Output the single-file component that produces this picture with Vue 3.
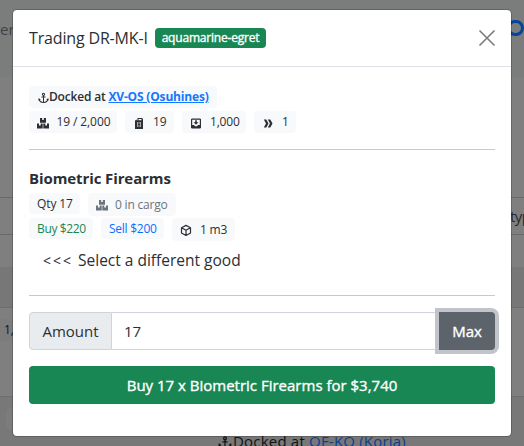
<script setup>
const holds = [
  { icon: 'boxes', text: '19 / 2,000', cls: 'w-cargo' },
  { icon: 'fuel', text: '19', cls: 'w-fuel' },
  { icon: 'inbox', text: '1,000', cls: 'w-inbox' },
  { icon: 'speed', text: '1', cls: 'w-speed' },
]
</script>

<template>
  <div class="page">
    <svg width="0" height="0" class="defs">
      <symbol id="anchor" viewBox="0 0 12 12">
        <g fill="none" stroke="currentColor" stroke-width="1.1">
          <circle cx="6" cy="2" r="1.2" />
          <path d="M6 3.2V10.8M3.8 5H8.2M1.2 7.2C1.5 9.6 3.3 10.7 6 10.8C8.7 10.7 10.5 9.6 10.8 7.2" />
        </g>
        <path d="M.4 8.6L.8 6L3 7.9ZM11.6 8.6L11.2 6L9 7.9Z" fill="currentColor" />
      </symbol>
      <symbol id="boxes" viewBox="0 0 12 12">
        <path fill="currentColor" d="M3 1H5.2V3H6.8V1H9V5.8H3ZM0 6.6H2V8.6H3.7V6.6H5.7V11.6H0ZM6.3 6.6H8.3V8.6H10V6.6H12V11.6H6.3Z" />
      </symbol>
      <symbol id="fuel" viewBox="0 0 12 12">
        <path fill="currentColor" fill-rule="evenodd" d="M2 3.8L3.5 2.2V3.3H4.5V1H9L10 2V12H2ZM5.5 2V3.2H8.5V2ZM4 5V10H4.6V5ZM7.4 5V10H8V5ZM5.400 5.500V6.500H6.600V5.500ZM5.400 8.500V9.500H6.600V8.500Z" />
      </symbol>
      <symbol id="inbox" viewBox="0 0 12 12">
        <path fill="currentColor" fill-rule="evenodd" d="M1.8 1.5H10.2L11 2.3V10.7L10.2 11.5H1.8L1 10.7V2.3ZM2.2 2.7V8H4L5 9.2H7L8 8H9.8V2.7ZM5.2 3.2H6.8V5.2H8.4L6 7.7L3.6 5.2H5.2Z" />
      </symbol>
      <symbol id="speed" viewBox="0 0 12 12">
        <path fill="currentColor" d="M1.8 2.5H4.3L6.5 6.5L4.3 10.5H1.8L4 6.5ZM5.8 2.5H8.3L10.5 6.5L8.3 10.5H5.8L8 6.5Z" />
      </symbol>
      <symbol id="cube" viewBox="0 0 12 12">
        <path fill="none" stroke="currentColor" stroke-width="1.2" stroke-linejoin="round" d="M6 1.4L10.5 3.7V8.9L6 11.4L1.5 8.9V3.7ZM1.5 3.7L6 6.2L10.5 3.7M6 6.2V11.4" />
      </symbol>
    </svg>

    <div class="behind">
      <div class="band nav"><span class="frag">er</span><i class="ring"></i></div>
      <div class="band blank"></div>
      <div class="band search"><span class="typ">typ</span></div>
      <div class="band gap"></div>
      <div class="band head"></div>
      <div class="band item"><span class="amount">1,</span></div>
      <div class="band foot">
        <i class="chip"></i>
        <span class="dock"><svg class="dock-ic"><use href="#anchor" /></svg>Docked at <a>QF-KO (Korja)</a></span>
      </div>
    </div>

    <section class="modal">
      <header>
        <h1>Trading DR-MK-I</h1>
        <span class="tag">aquamarine-egret</span>
        <svg class="close" viewBox="0 0 16 16"><path d="M.5 .5L15.5 15.5M15.5 .5L.5 15.5" /></svg>
      </header>

      <main>
        <div class="badge docked">
          <svg class="ic"><use href="#anchor" /></svg><span>Docked at <a>XV-OS (Osuhines)</a></span>
        </div>
        <div class="row holds">
          <div v-for="h in holds" :key="h.icon" class="badge" :class="h.cls">
            <svg class="ic"><use :href="'#' + h.icon" /></svg><span>{{ h.text }}</span>
          </div>
        </div>
        <hr>
        <h2>Biometric Firearms</h2>
        <div class="row">
          <div class="badge short w-qty"><span>Qty 17</span></div>
          <div class="badge tall muted w-in"><svg class="ic"><use href="#boxes" /></svg><span>0 in cargo</span></div>
        </div>
        <div class="row prices">
          <div class="badge short buy"><span>Buy $220</span></div>
          <div class="badge short sell"><span>Sell $200</span></div>
          <div class="badge tall w-vol"><svg class="ic"><use href="#cube" /></svg><span>1 m3</span></div>
        </div>
        <div class="select"><span class="arrows">&lt;&lt;&lt;</span> Select a different good</div>
        <hr class="second">
        <div class="group">
          <label>Amount</label>
          <div class="field">17</div>
          <button class="max">Max</button>
        </div>
        <button class="submit">Buy 17 x Biometric Firearms for $3,740</button>
      </main>
    </section>
  </div>
</template>

<style>
body { margin: 0; overflow: hidden; }
</style>

<style scoped>
* { box-sizing: border-box; }
.page {
  position: relative; width: 524px; height: 446px; overflow: hidden;
  font-family: "Open Sans", "Noto Sans", sans-serif; font-size: 15px; color: #2b2f33; background: #7f7f7f;
}
.defs { position: absolute; }
.behind { display: flex; flex-direction: column; height: 446px; color: #111315; }
.band { position: relative; flex: none; }
.nav { height: 77px; background: #7b7d7c; }
.frag { position: absolute; left: 0; top: 19px; color: #3f4246; }
.ring { position: absolute; left: 507px; top: 20px; width: 17px; height: 16px; border: 3px solid #06439a; border-radius: 8px; }
.blank { height: 120px; }
.search { height: 38px; border-top: 1px solid #676869; border-bottom: 1px solid #676869; }
.typ { position: absolute; left: 510px; top: 8px; letter-spacing: -.6px; color: #26292c; }
.gap { height: 32px; }
.head { height: 41px; background: #777; border-bottom: 1px solid #6d6e6f; }
.item { height: 89px; border-bottom: 1px solid #6d6e6f; }
.amount { position: absolute; left: 0; top: 11px; width: 20px; height: 22px; padding-left: 4px; font-size: 12px; line-height: 22px; background: #7c7c7d; }
.foot { height: 49px; background: #787878; }
.chip { position: absolute; left: 6px; top: 11px; width: 30px; height: 22px; border-radius: 5px; background: #7c7c7d; }
.dock { position: absolute; left: 218px; top: 34px; white-space: nowrap; letter-spacing: .2px; }
.dock-ic { width: 14px; height: 14px; margin-right: 1px; vertical-align: -3px; }
.dock a { color: #0a3f8e; }

.modal {
  position: absolute; left: 12px; top: 9px; width: 500px; height: 428px;
  background: #fff; background-clip: padding-box; border: 1px solid rgba(0, 0, 0, .2); border-radius: 5px;
}
header { display: flex; align-items: center; height: 57px; padding: 0 16px; border-bottom: 1px solid #dee2e6; }
h1 { margin: 0; width: 118px; font-size: 16px; font-weight: 400; white-space: nowrap; letter-spacing: -.16px; }
.tag {
  width: 111px; height: 20px; margin-left: 8px; border-radius: 4px; background: #198754; color: #fff;
  font-size: 12px; font-weight: 400; line-height: 20px; text-align: center; letter-spacing: -.2px;
  -webkit-text-stroke: .35px #fff;
}
.close { width: 16px; height: 16px; margin-left: auto; overflow: visible; }
.close path { stroke: #7b7b7b; stroke-width: 1.6; }
main { display: flex; flex-direction: column; padding: 19px 16px 0; }
.row { display: flex; gap: 8px; align-items: flex-start; }
.badge {
  display: flex; flex: none; align-items: center; height: 22px; padding: 0 8px;
  border-radius: 4px; background: #f8f9fa; font-size: 12px; letter-spacing: -.2px; white-space: nowrap;
}
.badge span { margin-top: -1px; }
.short { height: 21px; }
.short span { margin-top: 0; }
.tall { height: 23px; }
.ic { flex: none; width: 12px; height: 12px; margin: 1px 8px 0 0; }
.docked { width: 188px; font-weight: 600; letter-spacing: -.18px; }
.docked .ic { width: 11px; margin-left: 1px; margin-right: 0; }
.docked a { color: #1477ff; font-weight: 700; text-decoration: underline; }
.holds { margin-top: 3px; }
.w-cargo { width: 88px; letter-spacing: -.1px; }
.w-cargo span { margin-left: -.5px; }
.w-fuel { width: 49px; }
.w-inbox { width: 64px; }
.w-speed { width: 42px; }
hr { width: 100%; height: 1px; margin: 16px 0 0; border: 0; background: #c8c9ca; }
h2 { height: 24px; margin: 16px 0 3px; font-size: 15px; font-weight: 700; line-height: 24px; letter-spacing: -.1px; white-space: nowrap; }
.w-qty { width: 51px; letter-spacing: -.1px; }
.w-in { width: 88px; }
.w-in span { margin-left: -1px; }
.muted { color: #6c757d; }
.prices { margin-top: 2px; }
.buy { width: 64px; color: #198754; letter-spacing: -.35px; }
.sell { width: 63px; color: #0d6efd; letter-spacing: -.25px; }
.w-vol { width: 63px; }
.select { height: 24px; margin: 7px 0 0 14px; font-size: 15.5px; line-height: 24px; white-space: nowrap; }
.arrows { margin-right: 1px; font-size: 14px; letter-spacing: 2px; }
.second { margin-top: 23px; }
.group { display: flex; height: 38px; margin-top: 16px; }
label { width: 83px; border: 1px solid #ced4da; border-radius: 4px 0 0 4px; background: #e9ecef; line-height: 37px; text-align: center; }
.field { width: 327px; padding-left: 12px; border: 1px solid #ced4da; border-width: 1px 0; line-height: 37px; }
button { border: 0; padding: 0; font: 400 15px/38px "Open Sans", sans-serif; color: #fff; -webkit-text-stroke: .35px #fff; }
.max { width: 56px; border-radius: 0 4px 4px 0; background: #5c636a; box-shadow: 0 0 0 4px #c1c4c8; }
.submit { height: 38px; margin-top: 16px; border-radius: 4px; background: #198754; }
</style>
